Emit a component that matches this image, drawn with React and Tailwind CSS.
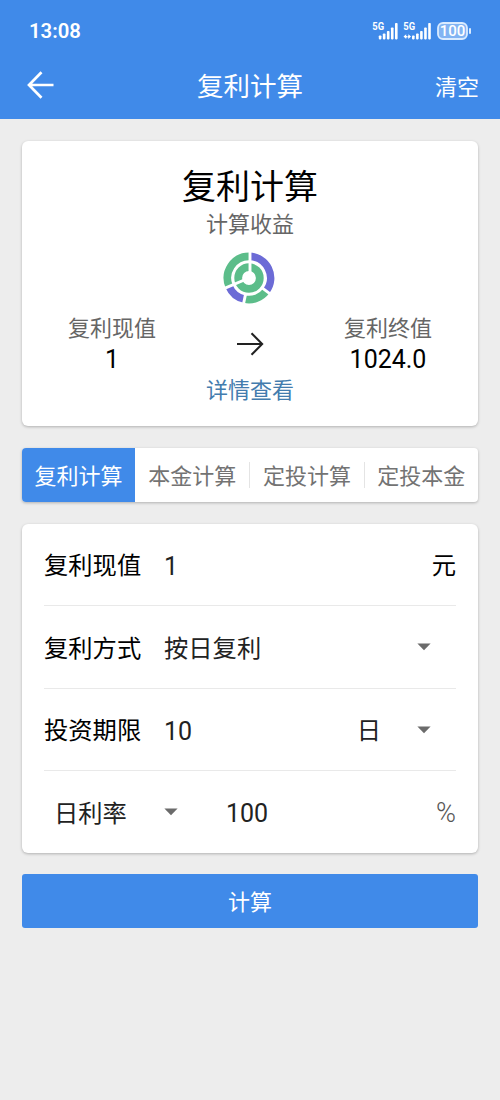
import React from "react";

const TABS = ["复利计算", "本金计算", "定投计算", "定投本金"];

function point(r, deg) {
  const a = ((deg - 90) * Math.PI) / 180;
  return `${(r * Math.cos(a)).toFixed(2)} ${(r * Math.sin(a)).toFixed(2)}`;
}

function arc(r, from, to) {
  return `M${point(r, from)}A${r} ${r} 0 ${to - from > 180 ? 1 : 0} 1 ${point(r, to)}`;
}

function RingChart() {
  return (
    <svg className="block" width="52" height="52" viewBox="-26 -26 52 52" fill="none">
      <g strokeWidth="7.6">
        <path d={arc(21.6, 0, 127)} stroke="#6c6bd6" />
        <path d={arc(21.6, 127, 192)} stroke="#5cbd8a" />
        <path d={arc(21.6, 192, 247)} stroke="#6c6bd6" />
        <path d={arc(21.6, 247, 360)} stroke="#5cbd8a" />
      </g>
      <circle r="10.8" stroke="#5cbd8a" strokeWidth="7.8" />
      <g stroke="#fff" strokeWidth="2.9">
        <path d={`M1 0L1 -26M0 0L${point(26, 247)}`} />
        <path d={`M${point(16, 127)}L${point(26, 127)}M${point(16, 192)}L${point(26, 192)}`} />
      </g>
    </svg>
  );
}

const BAR_HEIGHTS = [4, 6, 8.4, 12, 16.4];

function Signal({ data }) {
  const start = data ? 9 : 6.8;
  return (
    <svg className="block" width="28" height="20" viewBox="0 0 28 20" fill="#fff">
      <text x="0.3" y="9.4" fontSize="10" fontWeight="700" fontFamily="Roboto, sans-serif" textLength="11.8" lengthAdjust="spacingAndGlyphs">
        5G
      </text>
      {data && <path d="M0.5 15.6l2.7-2.3v1.6h.8v1.5h-.8v1.6zM8 15.6l-2.7-2.3v1.6h-.8v1.5h.8v1.6z" />}
      {BAR_HEIGHTS.map((h, i) => (
        <rect key={h} x={start + i * 4.05} y={18.4 - h} width="2.6" height={h} rx=".8" />
      ))}
    </svg>
  );
}

function Battery() {
  return (
    <svg className="block" width="34" height="18" viewBox="0 0 34 18">
      <rect x="1" y="1" width="29" height="16" rx="5" fill="#82b4f3" stroke="#d9ebff" strokeWidth="1.8" />
      <rect x="32" y="6" width="2" height="6" rx="1" fill="#d9ebff" />
      <text x="15.5" y="14.3" textAnchor="middle" fontSize="15" fontWeight="500" fontFamily="Roboto, sans-serif" fill="#fff">
        100
      </text>
    </svg>
  );
}

function Caret() {
  return (
    <svg className="block shrink-0" width="14" height="8" viewBox="0 0 14 8">
      <path d="M.4.5h13.2L7 7.3z" fill="#6b6b6b" />
    </svg>
  );
}

function Num({ children }) {
  return <span className="font-[Roboto,sans-serif] text-[25px]">{children}</span>;
}

function Row({ label, children, tall, last }) {
  return (
    <div
      className={
        last
          ? "flex h-[82px] items-center"
          : tall
            ? "flex h-[83px] items-center border-b border-[#e9e9e9] text-[#222]"
            : "flex h-[82px] items-center border-b border-[#e9e9e9] text-[#222]"
      }
    >
      {label && <span className="w-[120px] shrink-0 text-black">{label}</span>}
      {children}
    </div>
  );
}

const card = "bg-white shadow-[0_1px_3px_rgba(0,0,0,0.26)]";

export default function App() {
  return (
    <div className="flex h-[1100px] w-[500px] flex-col overflow-hidden bg-[#ededed] font-['Noto_Sans_CJK_SC',sans-serif] leading-none text-black">
      <header className="h-[119px] shrink-0 bg-[#408ae9] text-white">
        <div className="flex h-[52px] items-center pt-[9px] pr-[29px] pl-[29px]">
          <span className="pt-px font-[Roboto,sans-serif] text-[20.3px] font-semibold">13:08</span>
          <div className="ml-auto flex items-center">
            <div className="mr-[3px]">
              <Signal />
            </div>
            <div className="mr-[6px]">
              <Signal data />
            </div>
            <Battery />
          </div>
        </div>
        <div className="grid h-[67px] grid-cols-[1fr_auto_1fr] items-center px-[21px]">
          <svg className="mb-px ml-[6px] block" width="28" height="28" viewBox="0 0 28 28" fill="none" stroke="#fff" strokeWidth="2.7">
            <path d="M14.5 1.2L2 14l12.5 12.8M2.2 14H26.5" />
          </svg>
          <h1 className="pb-px text-[26.5px] font-normal">复利计算</h1>
          <span className="justify-self-end pb-px text-[22px]">清空</span>
        </div>
      </header>

      <main className="flex flex-col px-[22px] pt-[22px]">
        <section className={`${card} flex h-[285px] flex-col items-center rounded-md pt-[27px]`}>
          <h2 className="text-[34px] font-normal">复利计算</h2>
          <p className="mt-[9px] text-[22px] text-[#666]">计算收益</p>
          <div className="mt-[19px] mr-[3px]">
            <RingChart />
          </div>
          <div className="mt-[11px] grid w-full grid-cols-[180px_1fr_180px] items-center text-center">
            <div>
              <p className="text-[22px] text-[#666]">复利现值</p>
              <p className="mt-[10px]">
                <Num>1</Num>
              </p>
            </div>
            <svg className="mx-auto block" width="28" height="24" viewBox="0 0 28 24" fill="none" stroke="#222" strokeWidth="2">
              <path d="M1 12H26M15.5 1.2L26.2 12 15.5 22.8" />
            </svg>
            <div>
              <p className="text-[22px] text-[#666]">复利终值</p>
              <p className="mt-[10px]">
                <Num>1024.0</Num>
              </p>
            </div>
          </div>
          <a className="mt-[5px] text-[22px] text-[#437cae]">详情查看</a>
        </section>

        <nav className={`${card} mt-[22px] flex h-[54px] overflow-hidden rounded-[4px] text-[22px]`}>
          {TABS.map((tab, i) => (
            <div key={tab} className={i === 0 ? "flex w-[113px] items-center justify-center bg-[#408ae9] text-white" : "flex flex-1 items-center text-[#737373]"}>
              {i > 1 && <i className="h-[26px] w-px bg-[#e4e4e4]" />}
              <span className={i === 0 ? "pb-[3px]" : "flex-1 pb-[3px] text-center"}>{tab}</span>
            </div>
          ))}
        </nav>

        <section className={`${card} mt-[22px] rounded-md px-[22px] text-[24.3px]`}>
          <Row label="复利现值">
            <span className="pt-[2px]">
              <Num>1</Num>
            </span>
            <span className="ml-auto text-black">元</span>
          </Row>
          <Row label="复利方式" tall>
            <span>按日复利</span>
            <div className="mr-[25px] ml-auto">
              <Caret />
            </div>
          </Row>
          <Row label="投资期限">
            <span className="pt-[2px]">
              <Num>10</Num>
            </span>
            <span className="mr-[36px] ml-auto">日</span>
            <div className="mr-[25px]">
              <Caret />
            </div>
          </Row>
          <Row last>
            <span className="w-[120px] pl-[10px] text-[#222]">日利率</span>
            <Caret />
            <div className="ml-[48px] pt-[2px] text-[#222]">
              <Num>100</Num>
            </div>
            <span className="ml-auto pt-[2px] font-[Roboto,sans-serif] text-[27px] font-light text-[#555]">%</span>
          </Row>
        </section>

        <button className="mt-[21px] flex h-[54px] items-center justify-center rounded-[3px] bg-[#408ae9] pb-[3px] text-[22px] text-white">计算</button>
      </main>
    </div>
  );
}
